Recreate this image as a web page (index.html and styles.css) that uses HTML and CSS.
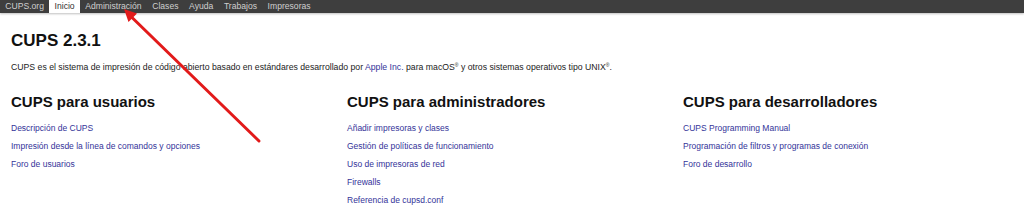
FILE: index.html
```html
<!DOCTYPE html>
<html lang="es">
<head>
<meta charset="utf-8">
<title>Inicio - CUPS 2.3.1</title>
<link rel="stylesheet" href="styles.css">
</head>
<body>
<div class="header">
  <a class="nav-item" href="#">CUPS.org</a>
  <a class="nav-item active" href="#">Inicio</a>
  <a class="nav-item" href="#">Administración</a>
  <a class="nav-item" href="#">Clases</a>
  <a class="nav-item" href="#">Ayuda</a>
  <a class="nav-item" href="#">Trabajos</a>
  <a class="nav-item" href="#">Impresoras</a>
</div>
<div class="body">
  <h1 class="title">CUPS 2.3.1</h1>
  <p class="intro">CUPS es el sistema de impresión de código abierto basado en estándares desarrollado por <a href="#">Apple Inc.</a> para macOS<sup>®</sup> y otros sistemas operativos tipo UNIX<sup>®</sup>.</p>
  <div class="columns">
    <div class="col">
      <h2 class="col-title">CUPS para usuarios</h2>
      <ul class="links">
        <li><a href="#">Descripción de CUPS</a></li>
        <li><a href="#">Impresión desde la línea de comandos y opciones</a></li>
        <li><a href="#">Foro de usuarios</a></li>
      </ul>
    </div>
    <div class="col">
      <h2 class="col-title">CUPS para administradores</h2>
      <ul class="links">
        <li><a href="#">Añadir impresoras y clases</a></li>
        <li><a href="#">Gestión de políticas de funcionamiento</a></li>
        <li><a href="#">Uso de impresoras de red</a></li>
        <li><a href="#">Firewalls</a></li>
        <li><a href="#">Referencia de cupsd.conf</a></li>
      </ul>
    </div>
    <div class="col">
      <h2 class="col-title">CUPS para desarrolladores</h2>
      <ul class="links">
        <li><a href="#">CUPS Programming Manual</a></li>
        <li><a href="#">Programación de filtros y programas de conexión</a></li>
        <li><a href="#">Foro de desarrollo</a></li>
      </ul>
    </div>
  </div>
</div>
<svg class="arrow" width="1024" height="220" viewBox="0 0 1024 220" aria-hidden="true">
  <line x1="259" y1="141" x2="132" y2="17.5" stroke="#e21a1a" stroke-width="3" stroke-linecap="round"/>
  <polygon points="124,9 137,13.5 128.5,22" fill="#e21a1a"/>
</svg>
</body>
</html>
```
FILE: styles.css
```css
html, body {
  margin: 0;
  padding: 0;
  background: #fff;
}
body {
  font-family: "Liberation Sans", Arial, Helvetica, sans-serif;
  color: #222;
  width: 1024px;
  height: 220px;
  overflow: hidden;
  position: relative;
}
.header {
  display: flex;
  height: 13px;
  background: #3e3e3e;
  box-shadow: 0 1px 2px rgba(0, 0, 0, 0.25);
}
.nav-item {
  display: block;
  font-size: 8.6px;
  line-height: 13px;
  padding: 0 5.3px;
  color: #cfcfcf;
  text-decoration: none;
}
.nav-item.active {
  background: #fff;
  color: #333;
}
.body {
  padding: 0 5px 0 11px;
}
.title {
  margin: 18px 0 0;
  font-size: 17px;
  line-height: 20px;
  font-weight: bold;
  color: #111;
}
.intro {
  margin: 10px 0 0;
  font-size: 8.7px;
  line-height: 12px;
  color: #222;
}
.intro sup {
  font-size: 5px;
  line-height: 0;
  vertical-align: 3px;
}
a {
  color: #333399;
  text-decoration: none;
}
.columns {
  display: grid;
  grid-template-columns: 336px 336px 336px;
  margin-top: 20px;
}
.col-title {
  margin: 0;
  font-size: 15px;
  line-height: 18px;
  font-weight: bold;
  color: #111;
}
.links {
  list-style: none;
  margin: 8px 0 0;
  padding: 0;
}
.links li {
  font-size: 8.5px;
  line-height: 18px;
}
.arrow {
  position: absolute;
  left: 0;
  top: 0;
  pointer-events: none;
}
```
